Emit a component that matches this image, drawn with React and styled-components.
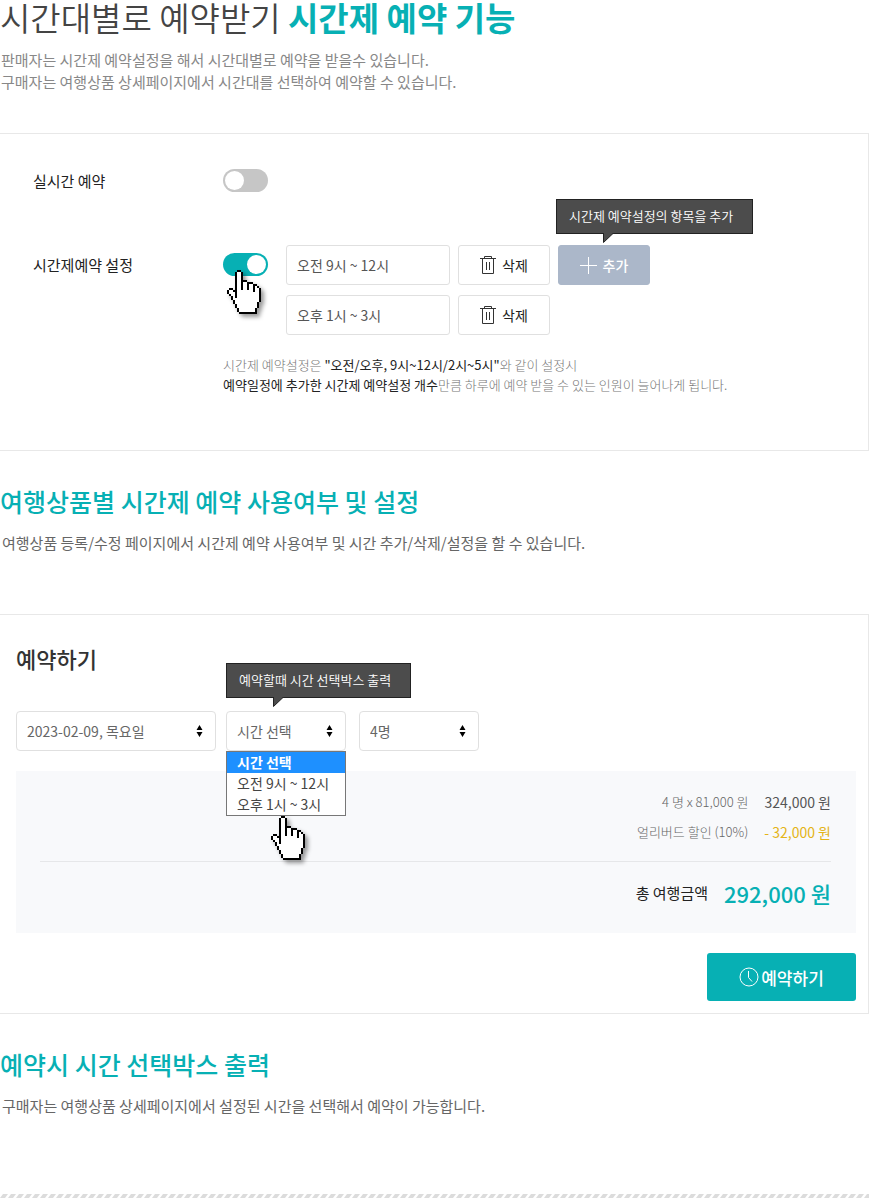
import React, { useState } from "react";
import styled, { createGlobalStyle } from "styled-components";

const GlobalStyle = createGlobalStyle`
  * {
    box-sizing: border-box;
  }
  body {
    margin: 0;
    background: #fff;
    color: #333;
    font-family: "Noto Sans CJK KR", "Noto Sans", sans-serif;
    font-size: 15px;
  }
  button, input, select {
    font-family: inherit;
  }
  h1, h2, h3, p, ul {
    margin: 0;
    padding: 0;
  }
`;

const Page = styled.main`
  padding-right: 1px;
`;

const Title = styled.h1`
  font-size: 33px;
  line-height: 34px;
  font-weight: 350;
  color: #444;

  strong {
    font-weight: 700;
    color: #07b0b4;
  }
`;

const Intro = styled.p`
  margin-top: 15px;
  padding-left: 1px;
  line-height: 22px;
  color: #888;
`;

const SectionTitle = styled.h2`
  margin-top: 32px;
  font-size: 25px;
  line-height: 36px;
  font-weight: 500;
  color: #07b0b4;
`;

const Description = styled.p`
  margin-top: 13px;
  padding-left: 2px;
  line-height: 22px;
  color: #666;
`;

const Card = styled.section`
  margin-top: ${(props) => props.$gap};
  padding: ${(props) => props.$padding};
  border: 1px solid #e8e8e8;
  border-left: 0;
`;

const SettingRow = styled.div`
  display: grid;
  grid-template-columns: 190px 1fr;
  align-items: start;
  margin-bottom: ${(props) => props.$gap || "0"};
`;

const SettingLabel = styled.label`
  line-height: 40px;
  color: #222;
`;

const SettingBody = styled.div`
  display: flex;
  gap: 18px;
`;

const ToggleBox = styled.div`
  position: relative;
  display: flex;
  align-items: center;
  height: 39px;
`;

const Toggle = styled.input`
  appearance: none;
  display: flex;
  width: 45px;
  height: 23px;
  margin: 0;
  padding: 2px;
  border-radius: 12px;
  background: #c6c6c6;
  cursor: pointer;

  &::before {
    content: "";
    width: 19px;
    height: 19px;
    border-radius: 50%;
    background: #fff;
  }
  &:checked {
    justify-content: flex-end;
    background: #07b0b4;
  }
`;

const TimeList = styled.div`
  display: flex;
  flex-direction: column;
  gap: 10px;
`;

const TimeRow = styled.div`
  display: flex;
  gap: 8px;
`;

const TimeInput = styled.input`
  width: 164px;
  height: 40px;
  padding: 0 10px;
  border: 1px solid #e0e0e0;
  border-radius: 3px;
  font-size: 14px;
  color: #555;
`;

const SmallButton = styled.button`
  display: flex;
  align-items: center;
  justify-content: center;
  gap: 6px;
  width: 92px;
  height: 40px;
  padding: 0;
  border: 1px solid ${(props) => (props.$filled ? "#abb7c9" : "#e0e0e0")};
  border-radius: 3px;
  background: ${(props) => (props.$filled ? "#abb7c9" : "#fff")};
  color: ${(props) => (props.$filled ? "#fff" : "#222")};
  font-size: 14px;
  font-weight: ${(props) => (props.$filled ? 500 : 400)};
  cursor: pointer;
`;

const Anchor = styled.div`
  position: relative;
`;

const Bubble = styled.div`
  position: absolute;
  z-index: 2;
  left: ${(props) => props.$left};
  bottom: ${(props) => props.$bottom};
  padding: 0 19px 2px 12px;
  border: 1px solid #222;
  background: #4c4c4c;
  color: #fff;
  font-size: 13px;
  font-weight: 350;
  line-height: 31px;
  white-space: nowrap;

  svg {
    position: absolute;
    left: 46px;
    top: 100%;
  }
`;

const Help = styled.p`
  margin: 20px 0 0 190px;
  font-size: 13px;
  font-weight: 300;
  line-height: 20px;
  color: #777;

  strong {
    font-weight: 400;
    color: #222;
  }
`;

const Pointer = styled.svg`
  position: absolute;
  z-index: 3;
  left: ${(props) => props.$left};
  top: ${(props) => props.$top};
  filter: drop-shadow(3px 3px 2px rgba(0, 0, 0, 0.4));
  pointer-events: none;
`;

const FormTitle = styled.h3`
  font-size: 22px;
  line-height: 30px;
  font-weight: 500;
  color: #333;
`;

const Fields = styled.div`
  display: flex;
  gap: 10px;
  margin-top: 38px;
`;

const Field = styled.div`
  position: relative;
  width: ${(props) => props.$width};

  &:last-child {
    margin-left: 3px;
  }
`;

const Select = styled.select`
  appearance: none;
  display: block;
  width: 100%;
  height: 40px;
  padding: 0 10px;
  border: 1px solid #e0e0e0;
  border-radius: 4px;
  background: #fff;
  color: #666;
  font-size: 14px;
`;

const Arrows = styled.svg`
  position: absolute;
  right: 13px;
  top: 14px;
  pointer-events: none;
`;

const Options = styled.ul`
  position: absolute;
  z-index: 1;
  top: 40px;
  left: 0;
  right: 0;
  border: 1px solid #777;
  background: #fff;
  list-style: none;
`;

const Option = styled.li`
  padding: 0 10px;
  font-size: 14px;
  line-height: 21px;
  white-space: nowrap;
  color: ${(props) => (props.$active ? "#fff" : "#444")};
  font-weight: ${(props) => (props.$active ? 700 : 400)};
  background: ${(props) => (props.$active ? "#1e90ff" : "#fff")};
`;

const Summary = styled.div`
  margin-top: 20px;
  padding: 16px 25px 20px 24px;
  background: #f8f9fb;
`;

const PriceRow = styled.div`
  display: flex;
  justify-content: flex-end;
  align-items: center;
  gap: 16px;
  line-height: 30px;
  font-size: 13px;
  font-weight: 300;
  color: #666;
`;

const Price = styled.span`
  font-size: 14px;
  font-weight: 400;
  color: ${(props) => (props.$discount ? "#e4b416" : "#555")};
`;

const TotalRow = styled(PriceRow)`
  margin-top: 14px;
  padding-top: 11px;
  border-top: 1px solid #e6e7e9;
  line-height: 40px;
  font-size: 15px;
  font-weight: 400;
  color: #222;

  strong {
    font-size: 22px;
    font-weight: 500;
    color: #07b0b4;
  }
`;

const Actions = styled.div`
  display: flex;
  justify-content: flex-end;
  margin-top: 20px;
`;

const ReserveButton = styled.button`
  display: flex;
  align-items: center;
  justify-content: center;
  gap: 2px;
  width: 149px;
  height: 48px;
  border: 0;
  border-radius: 3px;
  background: #07b0b4;
  color: #fff;
  font-size: 17px;
  font-weight: 500;
  cursor: pointer;
`;

const Stripe = styled.svg`
  display: block;
  width: 100%;
  height: 5px;
  margin-top: 77px;
`;

// X = outline, o = white inside
const HAND = [
  ".....XX..........",
  "....XooX.........",
  "....XooX.........",
  "....XooX.........",
  "....XooX.........",
  "....XooXXX.......",
  "....XooXooXXX....",
  "....XooXooXooXX..",
  "....XooXooXooXoX.",
  ".XX.XooXooXooXooX",
  "XooXXooooooooXooX",
  "XoooXoooooooooooX",
  ".XooXoooooooooooX",
  "..XoXoooooooooooX",
  "..XoooooooooooooX",
  "...XooooooooooooX",
  "...XoooooooooooX.",
  "....XooooooooooX.",
  "....XooooooooooX.",
  ".....XooooooooX..",
  ".....XooooooooX..",
  "......XXXXXXXXX..",
];

function HandPointer({ left, top }) {
  return (
    <Pointer
      $left={left}
      $top={top}
      width="34"
      height="44"
      viewBox="0 0 17 22"
      shapeRendering="crispEdges"
      aria-hidden="true"
    >
      {HAND.map((line, y) =>
        line.split("").map((cell, x) =>
          cell === "." ? null : (
            <rect
              key={x + "-" + y}
              x={x}
              y={y}
              width="1"
              height="1"
              fill={cell === "X" ? "#000" : "#fff"}
            />
          )
        )
      )}
    </Pointer>
  );
}

function Tooltip({ left, bottom, children }) {
  return (
    <Bubble role="tooltip" $left={left} $bottom={bottom}>
      {children}
      <svg width="12" height="11" viewBox="0 0 12 11" aria-hidden="true">
        <path d="M.5 0V9.500L10.500 0" fill="#4c4c4c" stroke="#222" />
      </svg>
    </Bubble>
  );
}

function TrashIcon() {
  return (
    <svg width="16" height="18" viewBox="0 0 16 18" fill="none" stroke="#333" aria-hidden="true">
      <path d="M0 2.500H16M4.500 2.500V.5H11.500V2.500M2.500 2.500V17.500H13.500V2.500M6.500 6V14M9.500 6V14" />
    </svg>
  );
}

function PlusIcon() {
  return (
    <svg width="17" height="17" viewBox="0 0 17 17" stroke="#fff" aria-hidden="true">
      <path d="M8.500 0V17M0 8.500H17" />
    </svg>
  );
}

function ClockIcon() {
  return (
    <svg width="20" height="20" viewBox="0 0 20 20" fill="none" stroke="#fff" aria-hidden="true">
      <circle cx="10" cy="10" r="9" />
      <path d="M9.500 4V10.500L13 14.500" />
    </svg>
  );
}

function SelectArrows() {
  return (
    <Arrows width="7" height="12" viewBox="0 0 7 12" aria-hidden="true">
      <path d="M3.500 0L6.500 5H.5ZM3.500 12L6.500 7H.5Z" fill="#000" />
    </Arrows>
  );
}

const times = ["오전 9시 ~ 12시", "오후 1시 ~ 3시"];

function SettingsCard() {
  const [realtime, setRealtime] = useState(false);
  const [hourly, setHourly] = useState(true);

  return (
    <Card $gap="40px" $padding="27px 12px 55px 33px">
      <SettingRow $gap="44px">
        <SettingLabel htmlFor="realtime">실시간 예약</SettingLabel>
        <ToggleBox>
          <Toggle
            id="realtime"
            type="checkbox"
            checked={realtime}
            onChange={() => setRealtime(!realtime)}
          />
        </ToggleBox>
      </SettingRow>
      <SettingRow>
        <SettingLabel htmlFor="hourly">시간제예약 설정</SettingLabel>
        <SettingBody>
          <ToggleBox>
            <Toggle
              id="hourly"
              type="checkbox"
              checked={hourly}
              onChange={() => setHourly(!hourly)}
            />
            <HandPointer left="4px" top="25px" />
          </ToggleBox>
          <TimeList>
            {times.map((time, i) => (
              <TimeRow key={time}>
                <TimeInput aria-label={"시간 " + (i + 1)} defaultValue={time} />
                <SmallButton type="button">
                  <TrashIcon />
                  삭제
                </SmallButton>
                {i === 0 && (
                  <Anchor>
                    <SmallButton type="button" $filled>
                      <PlusIcon />
                      추가
                    </SmallButton>
                    <Tooltip left="-2px" bottom="51px">
                      시간제 예약설정의 항목을 추가
                    </Tooltip>
                  </Anchor>
                )}
              </TimeRow>
            ))}
          </TimeList>
        </SettingBody>
      </SettingRow>
      <Help>
        시간제 예약설정은 <strong>"오전/오후, 9시~12시/2시~5시"</strong>와 같이
        설정시
        <br />
        <strong>예약일정에 추가한 시간제 예약설정 개수</strong>만큼 하루에 예약
        받을 수 있는 인원이 늘어나게 됩니다.
      </Help>
    </Card>
  );
}

function ReservationCard() {
  return (
    <Card $gap="60px" $padding="28px 12px 12px 16px">
      <FormTitle>예약하기</FormTitle>
      <Fields>
        <Field $width="200px">
          <Select aria-label="날짜">
            <option>2023-02-09, 목요일</option>
          </Select>
          <SelectArrows />
        </Field>
        <Field $width="120px">
          <Select aria-label="시간">
            <option>시간 선택</option>
            {times.map((time) => (
              <option key={time}>{time}</option>
            ))}
          </Select>
          <SelectArrows />
          <Tooltip left="0" bottom="53px">
            예약할때 시간 선택박스 출력
          </Tooltip>
          <Options role="listbox" aria-label="시간 선택">
            <Option role="option" aria-selected="true" $active>
              시간 선택
            </Option>
            {times.map((time) => (
              <Option role="option" aria-selected="false" key={time}>
                {time}
              </Option>
            ))}
          </Options>
          <HandPointer left="45px" top="105px" />
        </Field>
        <Field $width="120px">
          <Select aria-label="인원">
            <option>4명</option>
          </Select>
          <SelectArrows />
        </Field>
      </Fields>
      <Summary>
        <PriceRow>
          <span>4 명 x 81,000 원</span>
          <Price>324,000 원</Price>
        </PriceRow>
        <PriceRow>
          <span>얼리버드 할인 (10%)</span>
          <Price $discount>- 32,000 원</Price>
        </PriceRow>
        <TotalRow>
          <span>총 여행금액</span>
          <strong>292,000 원</strong>
        </TotalRow>
      </Summary>
      <Actions>
        <ReserveButton type="button">
          <ClockIcon />
          예약하기
        </ReserveButton>
      </Actions>
    </Card>
  );
}

function App() {
  return (
    <>
      <GlobalStyle />
      <Page>
        <Title>
          시간대별로 예약받기 <strong>시간제 예약 기능</strong>
        </Title>
        <Intro>
          판매자는 시간제 예약설정을 해서 시간대별로 예약을 받을수 있습니다.
          <br />
          구매자는 여행상품 상세페이지에서 시간대를 선택하여 예약할 수 있습니다.
        </Intro>
        <SettingsCard />
        <SectionTitle>여행상품별 시간제 예약 사용여부 및 설정</SectionTitle>
        <Description>
          여행상품 등록/수정 페이지에서 시간제 예약 사용여부 및 시간
          추가/삭제/설정을 할 수 있습니다.
        </Description>
        <ReservationCard />
        <SectionTitle>예약시 시간 선택박스 출력</SectionTitle>
        <Description>
          구매자는 여행상품 상세페이지에서 설정된 시간을 선택해서 예약이
          가능합니다.
        </Description>
        <Stripe aria-hidden="true">
          <defs>
            <pattern id="stripe" width="8" height="4" patternUnits="userSpaceOnUse">
              <path d="M3 0H8L5 4H0Z" fill="#dcdcdc" />
            </pattern>
          </defs>
          <rect width="100%" height="4" fill="url(#stripe)" />
        </Stripe>
      </Page>
    </>
  );
}

export default App;
